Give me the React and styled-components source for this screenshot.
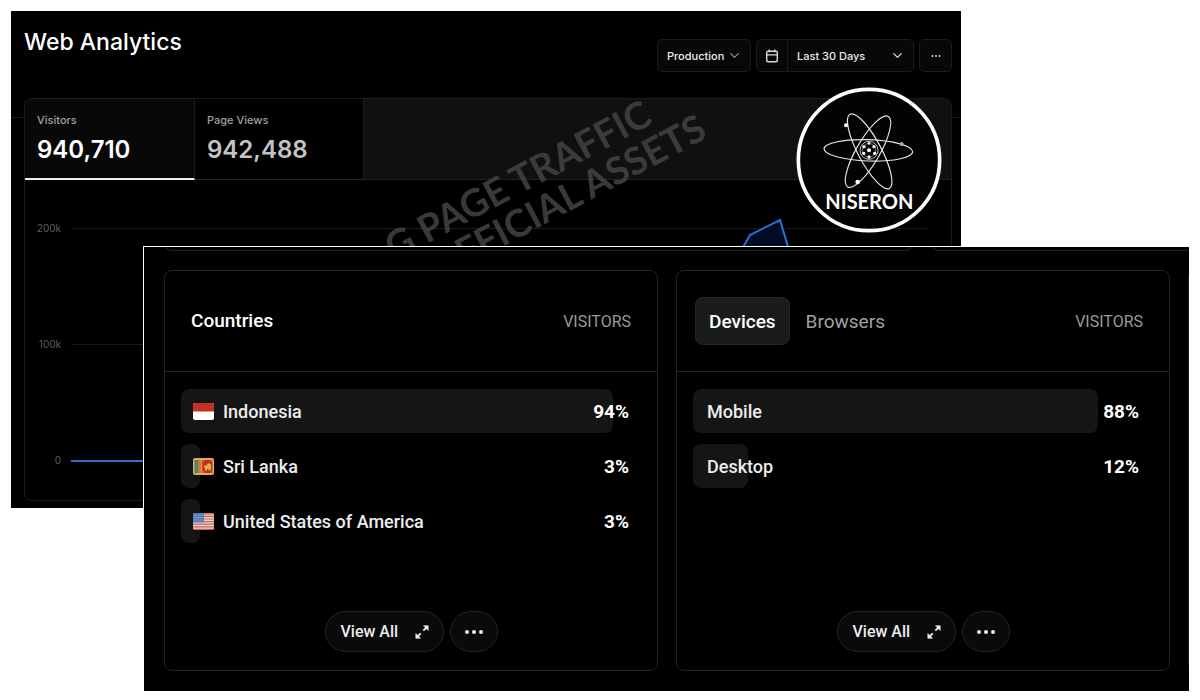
import React from "react";
import styled, { createGlobalStyle } from "styled-components";
import { ChevronDown } from "lucide-react";

const GlobalStyle = createGlobalStyle`
  * { box-sizing: border-box; }
  body { margin: 0; background: #fff; }
  button, select { font: inherit; color: inherit; margin: 0; cursor: pointer; }
  h1, h2, ul { margin: 0; padding: 0; font-weight: inherit; }
`;

const Stage = styled.main`
  display: grid;
  grid-template-columns: minmax(0, 1fr);
  align-items: start;
`;

/* ---------- overview window ---------- */

const Overview = styled.section`
  grid-area: 1 / 1;
  position: relative;
  margin: 11px 239px 0 11px;
  padding: 0 9px 7px 13px;
  background: #000;
  color: #ededed;
  font-family: Inter, "Liberation Sans", sans-serif;
`;

const TopBar = styled.header`
  display: flex;
  justify-content: space-between;
  align-items: flex-start;
  height: 87px;
`;

const Title = styled.h1`
  padding-top: 15px;
  font-size: 23px;
  line-height: 32px;
  font-weight: 500;
  color: #fff;
`;

const Controls = styled.div`
  display: flex;
  gap: 5px;
  padding-top: 28px;
  font-size: 11px;
  font-weight: 500;
`;

const ControlBox = styled.div`
  display: flex;
  height: 33px;
  border: 1px solid #1c1c1c;
  border-radius: 5px;
  background: #080808;
`;

const SelectWrap = styled.label`
  position: relative;
  display: flex;
  align-items: center;
  width: ${(p) => p.$width};

  svg {
    position: absolute;
    right: 8px;
    pointer-events: none;
    color: ${(p) => p.$chevron};
  }
`;

const Select = styled.select`
  appearance: none;
  width: 100%;
  height: 100%;
  padding: 0 0 0 9px;
  border: 0;
  background: transparent;
`;

const IconButton = styled.button`
  display: flex;
  align-items: center;
  justify-content: center;
  width: 31px;
  padding: 0;
  border: 0;
  border-right: ${(p) => (p.$divided ? "1px solid #1c1c1c" : "0")};
  background: transparent;
`;

const Rule = styled.hr`
  position: absolute;
  left: 0;
  right: 0;
  top: 106px;
  margin: 0;
  border: 0;
  border-top: 1px solid #1a1a1a;
`;

const ChartCard = styled.div`
  position: relative;
  height: 403px;
  border: 1px solid #1c1c1c;
  border-radius: 8px;
  background: #000;
  overflow: hidden;
`;

const Metrics = styled.div`
  display: flex;
  height: 81px;
  border-bottom: 1px solid #222;
  background: #101010;
`;

const Metric = styled.button`
  display: flex;
  flex-direction: column;
  align-items: flex-start;
  width: ${(p) => (p.$active ? "170px" : "169px")};
  height: 81px;
  padding: 13px 12px 0;
  border: 0;
  border-right: 1px solid #1c1c1c;
  border-bottom: ${(p) => (p.$active ? "2px solid #e8f0ec" : "1px solid #222")};
  background: ${(p) => (p.$active ? "#080808" : "#000")};
  text-align: left;
`;

const MetricName = styled.span`
  font-size: 11px;
  line-height: 16px;
  font-weight: 500;
  color: #a1a1a1;
`;

const MetricValue = styled.span`
  padding-top: 6px;
  font-size: 24px;
  line-height: 32px;
  font-weight: 600;
  color: ${(p) => (p.$active ? "#fff" : "#c4c4c4")};
`;

const Plot = styled.div`
  position: relative;
  padding: 40px 23px 0 11px;
`;

const Tick = styled.div`
  display: flex;
  align-items: center;
  gap: 10px;
  height: 16px;
  margin-bottom: 100px;
  font-size: 10px;
  color: #5c5c5c;

  span { width: 25px; text-align: right; }
  &::after { content: ""; flex: 1; height: 1px; background: #1a1a1a; }
`;

const Series = styled.svg`
  position: absolute;
  left: 46px;
  top: 48px;
  width: calc(100% - 69px);
  height: 233px;
  overflow: visible;
`;

const Watermark = styled.svg`
  position: absolute;
  left: 339px;
  top: 80px;
  overflow: visible;
  pointer-events: none;
  font-family: Lato, sans-serif;
  font-size: 38px;
  font-weight: 700;
`;

const Logo = styled.svg`
  position: absolute;
  right: 19px;
  top: 76px;
  width: 146px;
  height: 146px;
  font-family: Lato, sans-serif;
`;

/* ---------- breakdown window ---------- */

const Breakdown = styled.section`
  grid-area: 1 / 1;
  position: relative;
  margin: 246px 11px 9px 143px;
  padding: 0 0 20px 20px;
  border: solid #fff;
  border-width: 1px 0 0 1px;
  background: #000;
  color: #ededed;
  font-family: Roboto, "Liberation Sans", sans-serif;
  font-size: 18px;
  font-weight: 500;
  overflow: hidden;
`;

const Row = styled.div`
  display: flex;
  gap: 18px;
`;

const CardsAbove = styled(Row)`
  margin: -16px 0 19px;
`;

const CardAbove = styled.div`
  flex: ${(p) => p.$share};
  height: 20px;
  border: 1px solid #222;
  border-width: 0 ${(p) => (p.$cut ? "0" : "1px")} 1px 1px;
  border-radius: 0 0 ${(p) => (p.$cut ? "0" : "8px")} 8px;
`;

const Card = styled.article`
  display: flex;
  flex-direction: column;
  flex: 1;
  min-width: 0;
  min-height: 401px;
  padding-bottom: 18px;
  border: 1px solid #222;
  border-radius: 8px;
`;

const NextCard = styled.div`
  width: 1px;
  margin: 6px 0;
  background: #222;
`;

const CardHeader = styled.header`
  display: flex;
  align-items: center;
  justify-content: space-between;
  height: 101px;
  padding: 0 26px 0 ${(p) => (p.$tabs ? "18px" : "26px")};
  border-bottom: 1px solid #222;
`;

const CardTitle = styled.h2`
  font-size: 19px;
  line-height: 24px;
  color: #fff;
`;

const Tabs = styled.div`
  display: flex;
  gap: 2px;
`;

const Tab = styled.button`
  height: 48px;
  padding: 0 13px;
  border: 1px solid ${(p) => (p.$active ? "#262727" : "transparent")};
  border-radius: 8px;
  background: ${(p) => (p.$active ? "#1a1b1b" : "transparent")};
  color: ${(p) => (p.$active ? "#fff" : "#a1a1a1")};
  font-size: 19px;
  font-weight: ${(p) => (p.$active ? 500 : 400)};
`;

const ColumnName = styled.span`
  font-size: 16px;
  font-weight: 400;
  color: #999;
`;

const Bars = styled.ul`
  display: grid;
  gap: 11px;
  padding: 17px 16px 0;
  list-style: none;
`;

const BarItem = styled.li`
  position: relative;
  display: flex;
  align-items: center;
  gap: 9px;
  height: 44px;
  padding: 0 ${(p) => (p.$flag ? "12px" : "14px")};
`;

const Fill = styled.div`
  position: absolute;
  left: 0;
  top: 0;
  bottom: 0;
  min-width: 19px;
  border-radius: 8px;
  background: #151515;
`;

const BarLabel = styled.span`
  position: relative;
  flex: 1;
`;

const BarValue = styled.span`
  position: relative;
  font-size: 19px;
  font-weight: 700;
  color: #fff;
`;

const Flag = styled.svg`
  position: relative;
  width: 21px;
  height: 17px;
`;

const CardFooter = styled.footer`
  display: flex;
  justify-content: center;
  gap: 6px;
  margin-top: auto;
`;

const Pill = styled.button`
  display: flex;
  align-items: center;
  justify-content: ${(p) => (p.$round ? "center" : "space-between")};
  width: ${(p) => (p.$round ? "48px" : "119px")};
  height: 41px;
  padding: 0 ${(p) => (p.$round ? "0" : "14px")} 0 ${(p) => (p.$round ? "0" : "15px")};
  border: 1px solid #242424;
  border-radius: 21px;
  background: #0a0a0a;
  font-size: 16px;
`;

const Dots = ({ size, r, gap }) => (
  <svg width={size} height="6" viewBox={`0 0 ${size} 6`} fill="currentColor" aria-hidden="true">
    {[-1, 0, 1].map((i) => (
      <circle key={i} cx={size / 2 + i * gap} cy="3" r={r} />
    ))}
  </svg>
);

const CalendarIcon = () => (
  <svg width="14" height="14" viewBox="0 0 14 14" fill="none" stroke="#dcdcdc" strokeWidth="1.4" aria-hidden="true">
    <rect x="1.7" y="2.3" width="10.6" height="10.4" rx="1.5" />
    <path d="M1.7 5.9h10.6M4.3 .6v2.6M9.7 .6v2.6" />
  </svg>
);

const ExpandIcon = () => (
  <svg width="14" height="14" viewBox="0 0 14 14" fill="currentColor" stroke="currentColor" aria-hidden="true">
    <path d="M8.500 .8h4.700v4.700zM5.500 13.200H.8V8.500z" strokeWidth=".6" />
    <path d="M12.500 1.500 8.300 5.700M1.500 12.500l4.200-4.200" strokeWidth="1.800" />
  </svg>
);

const flags = {
  id: (
    <>
      <rect width="21" height="17" rx="2" fill="#fff" />
      <path d="M2 0h17a2 2 0 0 1 2 2v6.500H0V2a2 2 0 0 1 2-2z" fill="#c03221" />
    </>
  ),
  lk: (
    <>
      <rect width="21" height="17" rx="2" fill="#e2ac4c" />
      <path d="M1.500 2h3.500v13H1.500z" fill="#3f8c76" />
      <path d="M5 2h3.200v13H5z" fill="#d5713a" />
      <path d="M9.200 2h10.300v13H9.200z" fill="#bd3024" />
      <path d="M11 9.500V7.500h2.500l1-2h2l1.500 1v4.500l-1 1.500h-1.500v-1.500h-1.500V12.500h-2V10z" fill="#e2ac4c" />
      <path d="M10 3h1M17.700 3h1M10 14h1M17.700 14h1" stroke="#e2ac4c" />
    </>
  ),
  us: (
    <>
      <rect width="21" height="17" rx="2" fill="#ead9d2" />
      <path d="M1 .8h19M0 3.400h21M0 6h21M0 8.600h21M0 11.200h21M0 13.800h21M1 16.300h19" stroke="#c6604f" strokeWidth="1.200" />
      <path d="M2 0h9v9.300H0V2a2 2 0 0 1 2-2z" fill="#4d78b8" />
      <path d="M1.500 2h8.500M1.500 4.500h8.500M1.500 7h8.500" stroke="#b9c9df" strokeDasharray="1 1" />
    </>
  ),
};

const countries = [
  { name: "Indonesia", share: 94, flag: "id" },
  { name: "Sri Lanka", share: 3, flag: "lk" },
  { name: "United States of America", share: 3, flag: "us" },
];

const devices = [
  { name: "Mobile", share: 88 },
  { name: "Desktop", share: 12 },
];

const BarList = ({ items }) => (
  <Bars>
    {items.map((item) => (
      <BarItem key={item.name} $flag={!!item.flag}>
        <Fill style={{ width: `${item.share}%` }} />
        {item.flag && (
          <Flag viewBox="0 0 21 17" aria-hidden="true">{flags[item.flag]}</Flag>
        )}
        <BarLabel>{item.name}</BarLabel>
        <BarValue>{item.share}%</BarValue>
      </BarItem>
    ))}
  </Bars>
);

const CardActions = () => (
  <CardFooter>
    <Pill type="button">View All <ExpandIcon /></Pill>
    <Pill type="button" $round aria-label="More">
      <Dots size={20} r={2} gap={7} />
    </Pill>
  </CardFooter>
);

const NiseronLogo = () => (
  <Logo viewBox="18 19 438 438" role="img" aria-label="Niseron">
    <circle cx="237" cy="238" r="212" fill="#030303" stroke="#fff" strokeWidth="11" />
    <g fill="none" stroke="#e6e6e6" strokeWidth="3.500">
      <ellipse cx="235" cy="209" rx="133" ry="32" transform="rotate(2 235 209)" />
      <ellipse cx="239" cy="212" rx="126" ry="35" transform="rotate(62 239 212)" />
      <ellipse cx="234" cy="213" rx="122" ry="35" transform="rotate(-60 234 213)" />
      <circle cx="237" cy="209" r="27" strokeWidth="2.500" />
      <circle cx="237" cy="209" r="20" strokeWidth="2" stroke="#aaa" />
    </g>
    <g fill="#fff">
      <circle cx="237" cy="209" r="6" />
      <circle cx="222" cy="198" r="5" />
      <circle cx="252" cy="198" r="5" />
      <circle cx="221" cy="218" r="5" />
      <circle cx="254" cy="218" r="5" />
      <circle cx="237" cy="229" r="5" />
      <circle cx="237" cy="188" r="4" />
      <circle cx="168" cy="134" r="6" />
      <circle cx="203" cy="304" r="7" />
      <circle cx="335" cy="190" r="6" fill="#aaa" />
    </g>
    <text x="238" y="386" textAnchor="middle" fontSize="60" fontWeight="700" fill="#fff">NISERON</text>
  </Logo>
);

export default function App() {
  return (
    <Stage>
      <GlobalStyle />

      <Overview>
        <Rule />
        <TopBar>
          <Title>Web Analytics</Title>
          <Controls>
            <ControlBox>
              <SelectWrap $width="92px" $chevron="#8f8f8f">
                <Select aria-label="Environment" defaultValue="Production">
                  <option>Production</option>
                </Select>
                <ChevronDown size={15} strokeWidth={2} />
              </SelectWrap>
            </ControlBox>
            <ControlBox>
              <IconButton type="button" $divided aria-label="Pick dates"><CalendarIcon /></IconButton>
              <SelectWrap $width="125px" $chevron="#dedede">
                <Select aria-label="Period" defaultValue="Last 30 Days">
                  <option>Last 30 Days</option>
                </Select>
                <ChevronDown size={15} strokeWidth={2} />
              </SelectWrap>
            </ControlBox>
            <ControlBox>
              <IconButton type="button" aria-label="More options"><Dots size={12} r={0.9} gap={3.6} /></IconButton>
            </ControlBox>
          </Controls>
        </TopBar>

        <ChartCard>
          <Metrics>
            <Metric type="button" $active>
              <MetricName>Visitors</MetricName>
              <MetricValue $active>940,710</MetricValue>
            </Metric>
            <Metric type="button">
              <MetricName>Page Views</MetricName>
              <MetricValue>942,488</MetricValue>
            </Metric>
          </Metrics>
          <Plot>
            <Tick><span>200k</span></Tick>
            <Tick><span>100k</span></Tick>
            <Tick><span>0</span></Tick>
            <Series viewBox="0 0 857 233" preserveAspectRatio="none" aria-hidden="true">
              <path
                d="M0 233H591L620 150L650 58L679 7L709 -8L739 92L768 233H857"
                fill="#030c26"
                stroke="#2f6fd0"
                strokeWidth="2"
                vectorEffect="non-scaling-stroke"
              />
            </Series>
          </Plot>
        </ChartCard>

        <Watermark width="360" height="160" viewBox="0 0 360 160" fill="#444" fillOpacity="0.85">
          <text textAnchor="end" transform="translate(304 32) rotate(-28)">G PAGE TRAFFIC</text>
          <text textAnchor="end" transform="translate(359 46) rotate(-28)">OFFICIAL ASSETS</text>
        </Watermark>

        <NiseronLogo />
      </Overview>

      <Breakdown>
        <CardsAbove aria-hidden="true">
          <CardAbove $share={749} />
          <CardAbove $share={258} $cut />
        </CardsAbove>
        <Row>
          <Card>
            <CardHeader>
              <CardTitle>Countries</CardTitle>
              <ColumnName>VISITORS</ColumnName>
            </CardHeader>
            <BarList items={countries} />
            <CardActions />
          </Card>
          <Card>
            <CardHeader $tabs>
              <Tabs>
                <Tab type="button" $active>Devices</Tab>
                <Tab type="button">Browsers</Tab>
              </Tabs>
              <ColumnName>VISITORS</ColumnName>
            </CardHeader>
            <BarList items={devices} />
            <CardActions />
          </Card>
          <NextCard />
        </Row>
      </Breakdown>
    </Stage>
  );
}
